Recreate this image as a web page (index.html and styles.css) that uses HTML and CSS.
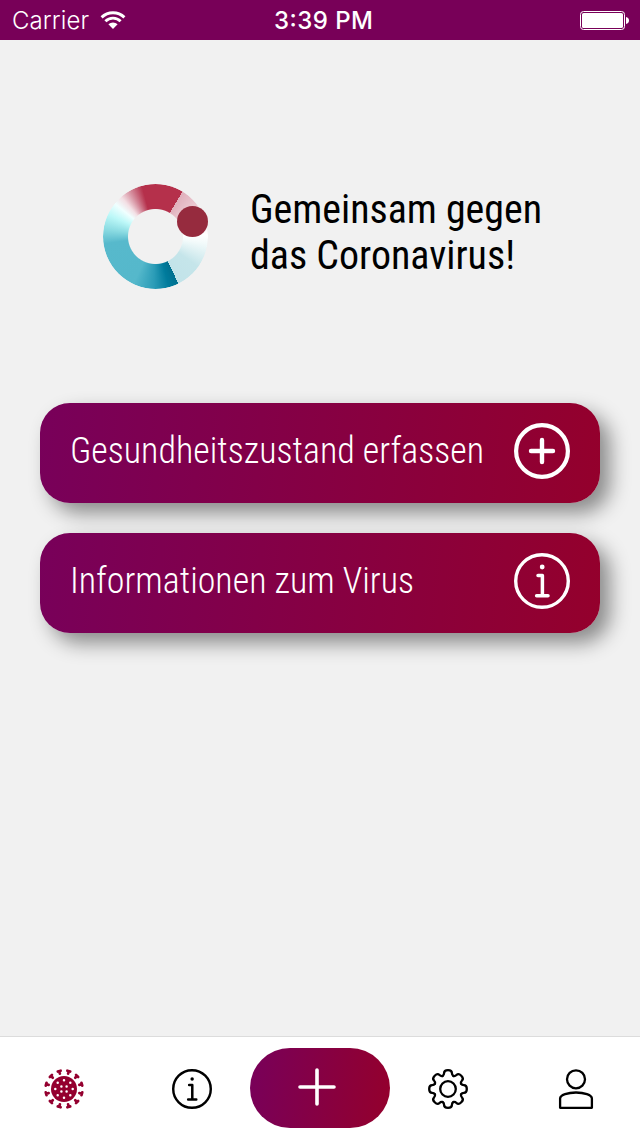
FILE: index.html
```html
<!DOCTYPE html>
<html lang="de">
<head>
<meta charset="utf-8">
<title>Gemeinsam gegen das Coronavirus!</title>
<link rel="stylesheet" href="styles.css">
</head>
<body>
<div class="screen">
  <header class="status">
    <div class="carrier">
      <svg class="carrier-name" viewBox="0 0 80 40"><text x="0" y="29" textLength="77">Carrier</text></svg>
      <svg class="wifi" viewBox="0 0 26 20"><path d="M1.600 7.400a16.200 16.200 0 0 1 22.800 0M5.400 11.300a10.800 10.800 0 0 1 15.200 0"/><path class="solid" d="M8.400 14.300a6.500 6.500 0 0 1 9.200 0L13 18.900z"/></svg>
    </div>
    <svg class="time" viewBox="0 0 100 40"><text x="4" y="29" textLength="99">3:39 PM</text></svg>
    <svg class="battery" viewBox="0 0 50 20"><rect class="shell" x=".5" y=".5" width="44" height="18" rx="3"/><rect x="2" y="2" width="41" height="15" rx="1.600"/><path d="M46 6c4 .4 4 6.600 0 7z"/></svg>
  </header>
  <main class="content">
    <section class="hero">
      <div class="logo"><div class="ring"></div><span class="dot"></span></div>
      <svg class="headline" viewBox="0 0 310 100">
        <text x="0" y="43" textLength="292" lengthAdjust="spacingAndGlyphs">Gemeinsam gegen</text>
        <text x="0" y="89" textLength="265" lengthAdjust="spacingAndGlyphs">das Coronavirus!</text>
      </svg>
    </section>
    <div class="actions">
      <a class="action">
        <svg class="label" viewBox="0 0 420 100"><text x="0" y="60" textLength="414" lengthAdjust="spacingAndGlyphs">Gesundheitszustand erfassen</text></svg>
        <svg class="action-icon" viewBox="0 0 56 56"><circle cx="28" cy="28" r="25.900" stroke-width="4.200"/><path d="M17 28h22M28 17v22" stroke-width="4.400"/></svg>
      </a>
      <a class="action">
        <svg class="label" viewBox="0 0 420 100"><text x="0" y="60" textLength="344" lengthAdjust="spacingAndGlyphs">Informationen zum Virus</text></svg>
        <svg class="action-icon" viewBox="0 0 56 56"><use href="#info"/></svg>
      </a>
    </div>
  </main>
  <nav class="tabs">
    <a class="tab">
      <svg class="virus" viewBox="-20 -20 40 40">
        <defs><path id="spike" d="M0-15.900V-18.300M-1.500-18.500H1.500"/></defs>
        <circle r="13"/>
        <g class="spikes">
          <use href="#spike" transform="rotate(15)"/><use href="#spike" transform="rotate(45)"/><use href="#spike" transform="rotate(75)"/><use href="#spike" transform="rotate(105)"/><use href="#spike" transform="rotate(135)"/><use href="#spike" transform="rotate(165)"/><use href="#spike" transform="rotate(195)"/><use href="#spike" transform="rotate(225)"/><use href="#spike" transform="rotate(255)"/><use href="#spike" transform="rotate(285)"/><use href="#spike" transform="rotate(315)"/><use href="#spike" transform="rotate(345)"/>
        </g>
        <path class="spots" d="M0-8.700h0M0 8.700h0M-8.700 0h0M8.700 0h0M-6.300-6.300h0M6.300-6.300h0M-6.300 6.300h0M6.300 6.300h0M-2.600-2.600h0M2.600-2.600h0M-2.600 2.600h0M2.600 2.600h0"/>
      </svg>
    </a>
    <a class="tab">
      <svg viewBox="0 0 56 56">
        <defs><g id="info"><circle cx="28" cy="28" r="26.300" stroke-width="3.400"/><path d="M24 22.400h4.400v20.400M22.600 42.800h11.400" stroke-width="3.500"/><path d="M28.200 14h0" stroke-width="4.800"/></g></defs>
        <use href="#info"/>
      </svg>
    </a>
    <a class="tab">
      <span class="add"><svg viewBox="0 0 40 40"><path d="M3 20h34M20 3v34" stroke-width="3.600"/></svg></span>
    </a>
    <a class="tab">
      <svg viewBox="-20 -20 40 40" stroke-width="2.300">
        <defs><path id="tooth" d="M-5.400-13.040C-4.200-13.700-3.900-14.400-3.900-15.900C-3.900-18.100-2.200-18.800 0-18.800S3.900-18.100 3.900-15.900C3.900-14.400 4.200-13.700 5.400-13.040"/></defs>
        <circle r="7.800"/>
        <use href="#tooth"/><use href="#tooth" transform="rotate(45)"/><use href="#tooth" transform="rotate(90)"/><use href="#tooth" transform="rotate(135)"/><use href="#tooth" transform="rotate(180)"/><use href="#tooth" transform="rotate(225)"/><use href="#tooth" transform="rotate(270)"/><use href="#tooth" transform="rotate(315)"/>
      </svg>
    </a>
    <a class="tab">
      <svg viewBox="0 0 40 40" stroke-width="2.300"><circle cx="20" cy="10.300" r="9"/><path d="M4.100 38.800V29.600C4.100 26 12 23.500 20 23.500S35.900 26 35.900 29.600V38.800Z"/></svg>
    </a>
  </nav>
</div>
</body>
</html>
```
FILE: styles.css
```css
* { box-sizing: border-box; }
body { margin: 0; }
svg { display: block; overflow: visible; flex: none; }
.screen {
  width: 640px;
  height: 1136px;
  display: flex;
  flex-direction: column;
  background: #f1f1f1;
  overflow: hidden;
}
.status {
  height: 40px;
  flex: none;
  display: grid;
  grid-template-columns: 1fr 100px 1fr;
  align-items: center;
  padding: 0 10px;
  background: #780058;
  color: #fff;
  font: 24px Inter, "Liberation Sans", sans-serif;
}
.status svg { fill: #fff; }
.carrier { display: flex; align-items: center; gap: 8px; padding-left: 2px; font-weight: 350; }
.carrier-name { width: 80px; height: 40px; }
.wifi { width: 26px; height: 20px; }
.wifi path { fill: none; stroke: #fff; stroke-width: 2.9; }
.wifi .solid { fill: #fff; stroke: none; }
.time { width: 100px; height: 40px; font-weight: 500; }
.battery { width: 50px; height: 20px; justify-self: end; margin-top: 2px; }
.battery .shell { fill: none; stroke: #fff; }
.content { flex: 1; padding: 140px 40px 0; }
.hero {
  height: 223px;
  padding-left: 63px;
  display: flex;
  align-items: flex-start;
  gap: 42px;
}
.logo { position: relative; width: 105px; height: 105px; margin-top: 4px; }
.ring {
  height: 100%;
  border-radius: 50%;
  background: conic-gradient(#b5304b 0 31deg, #e0b0bc 31deg, #edcdd5 55deg, #fff 88deg, #f2fafa 98deg, #c5e5ea 125deg, #c2e3e9 154deg, #00708f 154deg, #007b9c 165deg, #2b9cb7 182deg, #55b8cb 205deg, #57b9cc 262deg, #8bdbe2 278deg, #bdf8f8 295deg, #f0ffff 309deg, #f3dfe4 319deg, #d58d9d 331deg, #b5304b 345deg);
  mask: radial-gradient(circle, transparent 27px, #000 28px);
}
.dot {
  position: absolute;
  left: 74px;
  top: 22px;
  width: 31px;
  height: 31px;
  border-radius: 50%;
  background: #962b3e;
}
.headline {
  width: 310px;
  height: 100px;
  font: 40px "Roboto Condensed", Roboto, sans-serif;
  font-stretch: 75%;
}
.actions { display: flex; flex-direction: column; gap: 30px; }
.action {
  height: 100px;
  padding: 0 30px;
  display: flex;
  align-items: center;
  justify-content: space-between;
  border-radius: 30px;
  background: linear-gradient(95deg, #78005a, #94002c);
  box-shadow: 10px 10px 20px rgba(0, 0, 0, .43);
}
.label {
  width: 420px;
  height: 100px;
  fill: #fff;
  font: 300 36px "Roboto Condensed", Roboto, sans-serif;
  font-stretch: 75%;
}
.action-icon {
  width: 56px;
  height: 56px;
  margin-bottom: 4px;
  fill: none;
  stroke: #fff;
  stroke-linecap: round;
  stroke-linejoin: round;
}
.tabs {
  height: 100px;
  flex: none;
  display: grid;
  grid-template-columns: repeat(5, minmax(0, 1fr));
  background: #fff;
  border-top: 1px solid #dcdcdc;
}
.tab { display: flex; justify-content: center; padding-top: 32px; }
.tab svg {
  width: 40px;
  height: 40px;
  flex: none;
  fill: none;
  stroke: #000;
  stroke-linecap: round;
  stroke-linejoin: round;
}
.tab .virus { fill: #94002f; stroke: none; }
.spikes { stroke: #94002f; stroke-width: 2.7; }
.spots { stroke: #fff; stroke-width: 2.5; }
.add {
  width: 140px;
  height: 80px;
  flex: none;
  margin-top: -21px;
  padding: 19px 0 0 47px;
  border-radius: 40px;
  background: linear-gradient(97deg, #78005a, #94002c);
}
.tab .add svg { stroke: #fff; }
```
